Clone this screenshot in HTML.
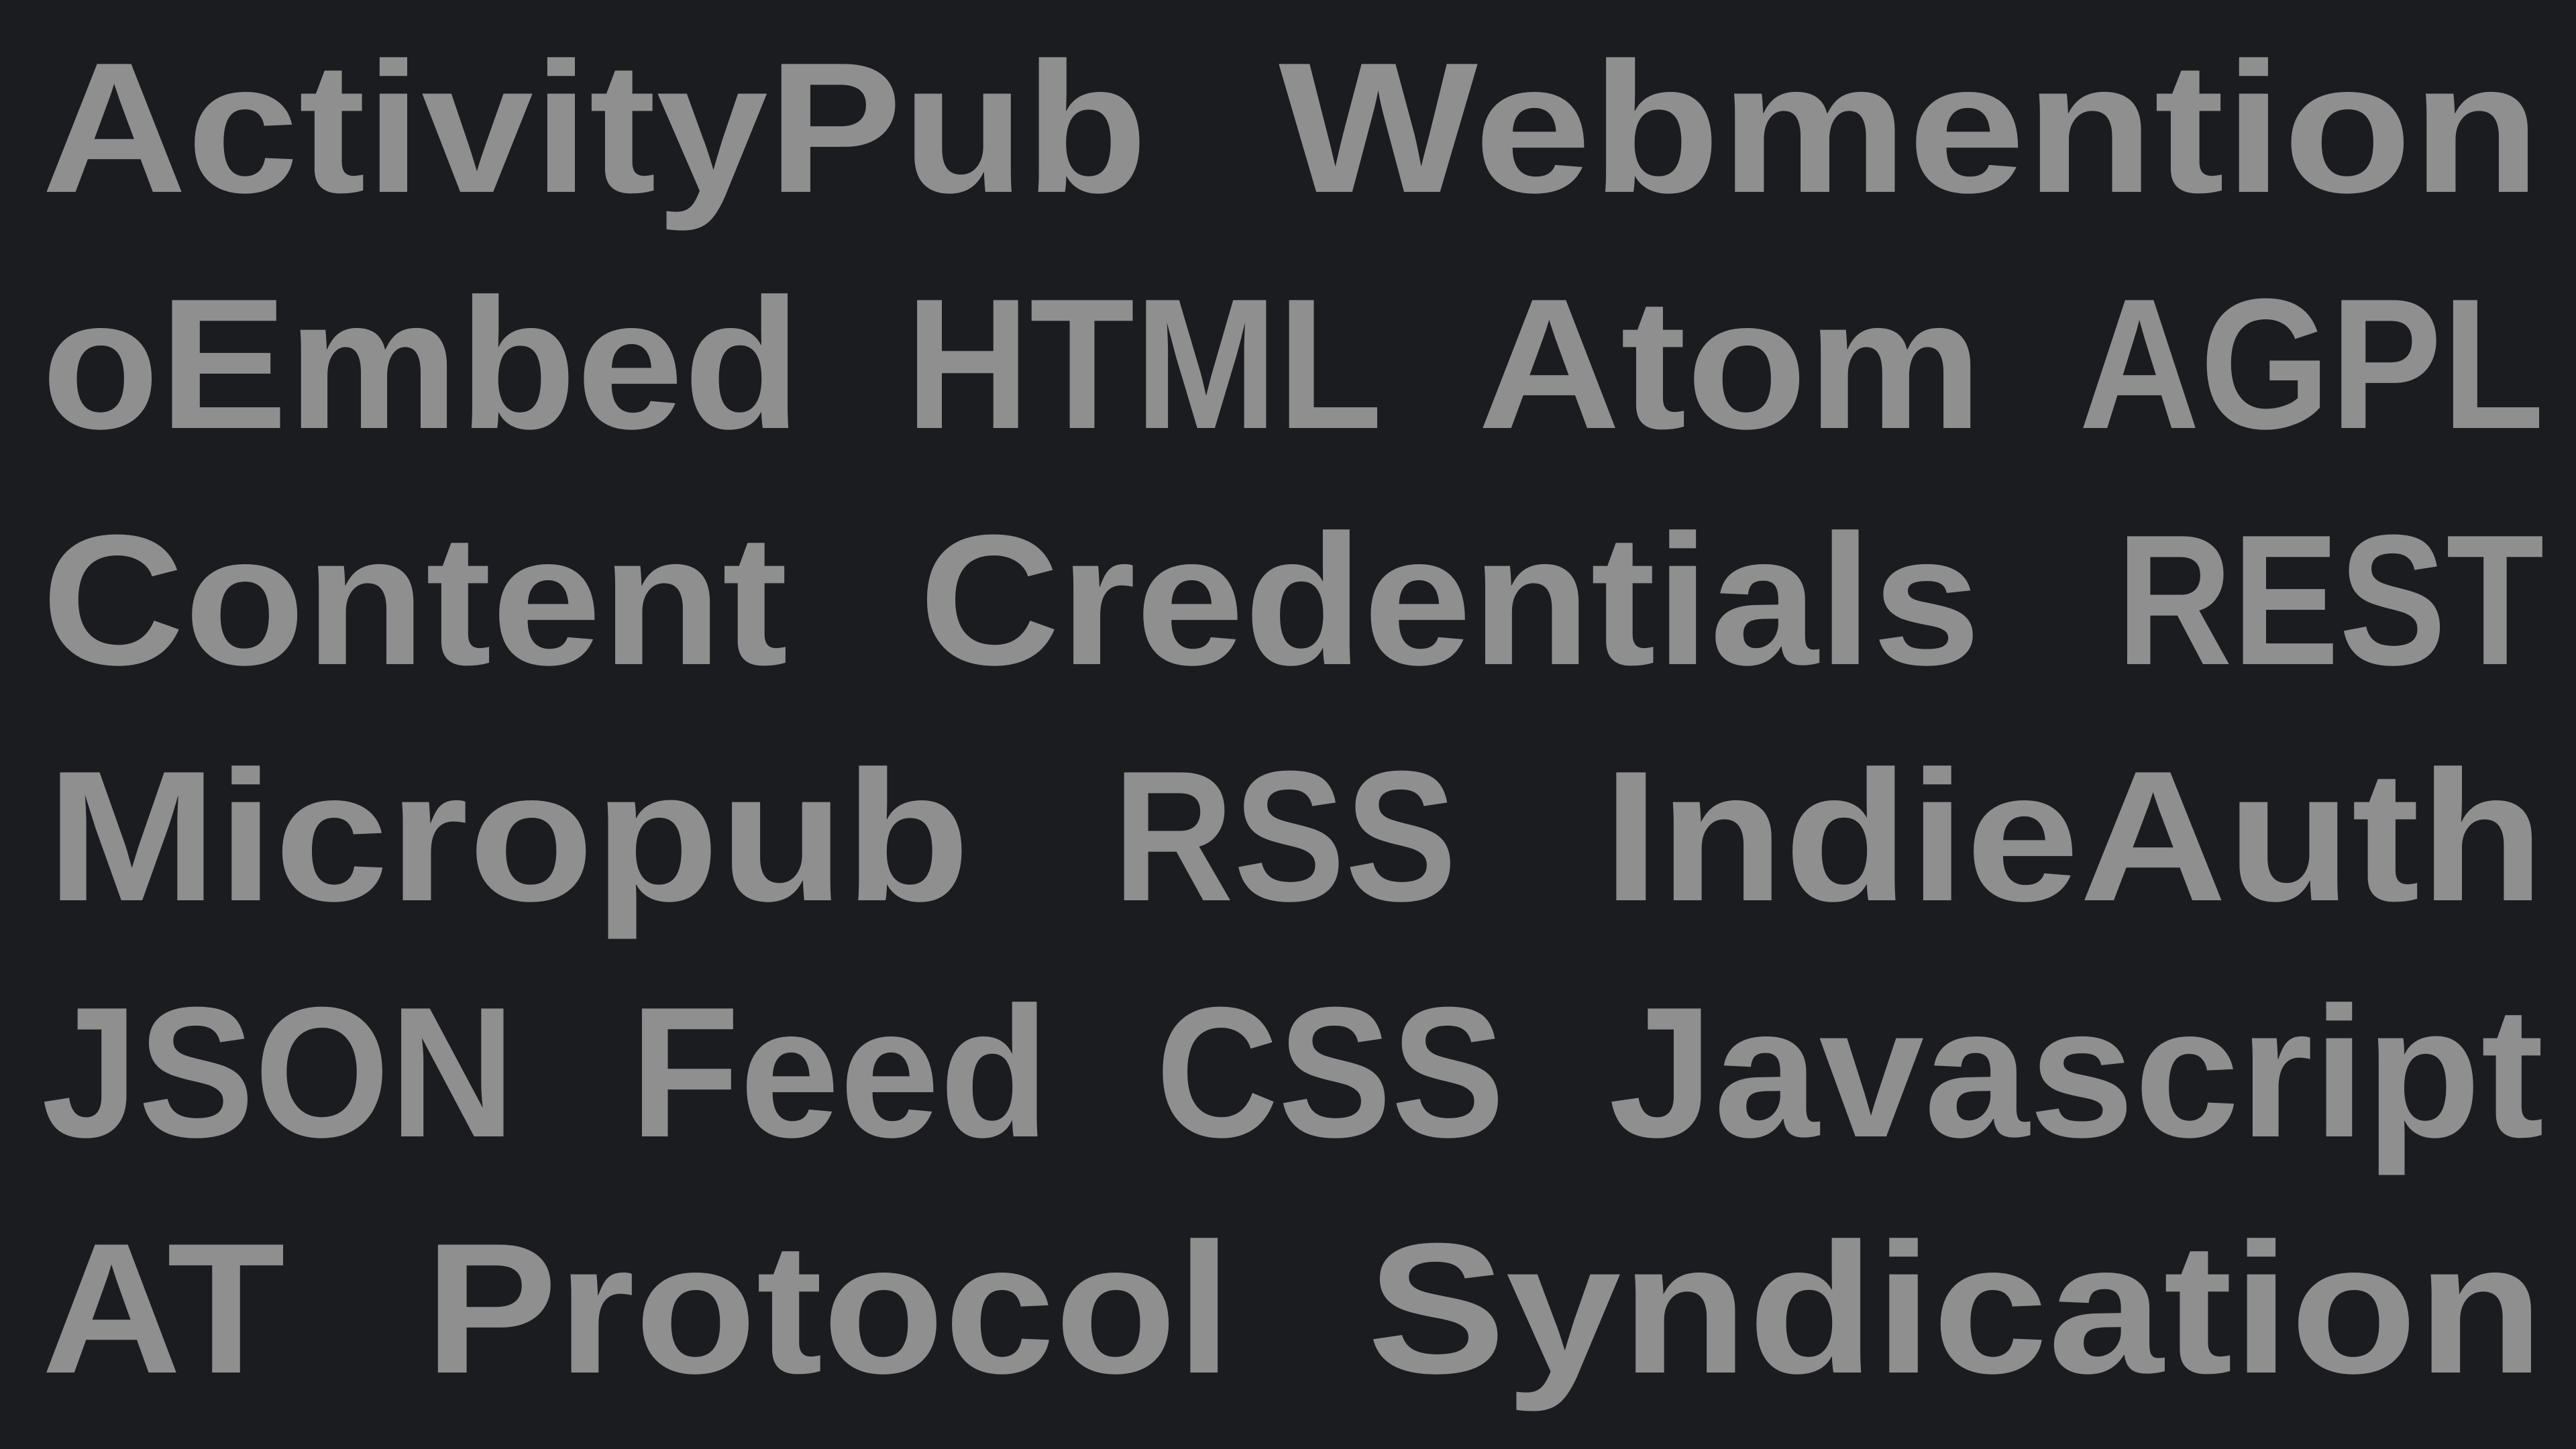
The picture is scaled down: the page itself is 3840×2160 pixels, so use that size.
<!DOCTYPE html>
<html><head><meta charset="utf-8"><style>
html,body{margin:0;padding:0;background:#1b1c20;width:3840px;height:2160px;overflow:hidden}
.l{position:absolute;left:0;height:352px;line-height:352px;font-family:"Liberation Sans",sans-serif;font-weight:bold;font-size:277px;color:#8f8f8f;white-space:nowrap}
.l span{position:absolute;top:0;transform-origin:0 0;display:inline-block}
</style></head><body>
<div class="l" style="top:14px"><span>ActivityPub</span><span>Webmention</span></div>
<div class="l" style="top:366px"><span>oEmbed</span><span>HTML</span><span>Atom</span><span>AGPL</span></div>
<div class="l" style="top:718px"><span>Content</span><span>Credentials</span><span>REST</span></div>
<div class="l" style="top:1070px"><span>Micropub</span><span>RSS</span><span>IndieAuth</span></div>
<div class="l" style="top:1422px"><span>JSON</span><span>Feed</span><span>CSS</span><span>Javascript</span></div>
<div class="l" style="top:1774px"><span>AT</span><span>Protocol</span><span>Syndication</span></div>
<script>
var T=[[27,697],[780,1545],[27,486],[553,840],[901,1205],[1267,1547],[27,478],[561,1204],[1290,1547],[30,589],[679,885],[977,1547],[27,312],[385,637],[705,914],[981,1547],[27,172],[260,748],[834,1547]];
var s=document.querySelectorAll('.l span'),k=2.449;
for(var i=0;i<s.length;i++){var w=s[i].getBoundingClientRect().width;var a=T[i][0]*k-4,b=T[i][1]*k+4;s[i].style.left=a+'px';s[i].style.transform='scaleX('+((b-a)/w)+')';}
</script>
</body></html>
